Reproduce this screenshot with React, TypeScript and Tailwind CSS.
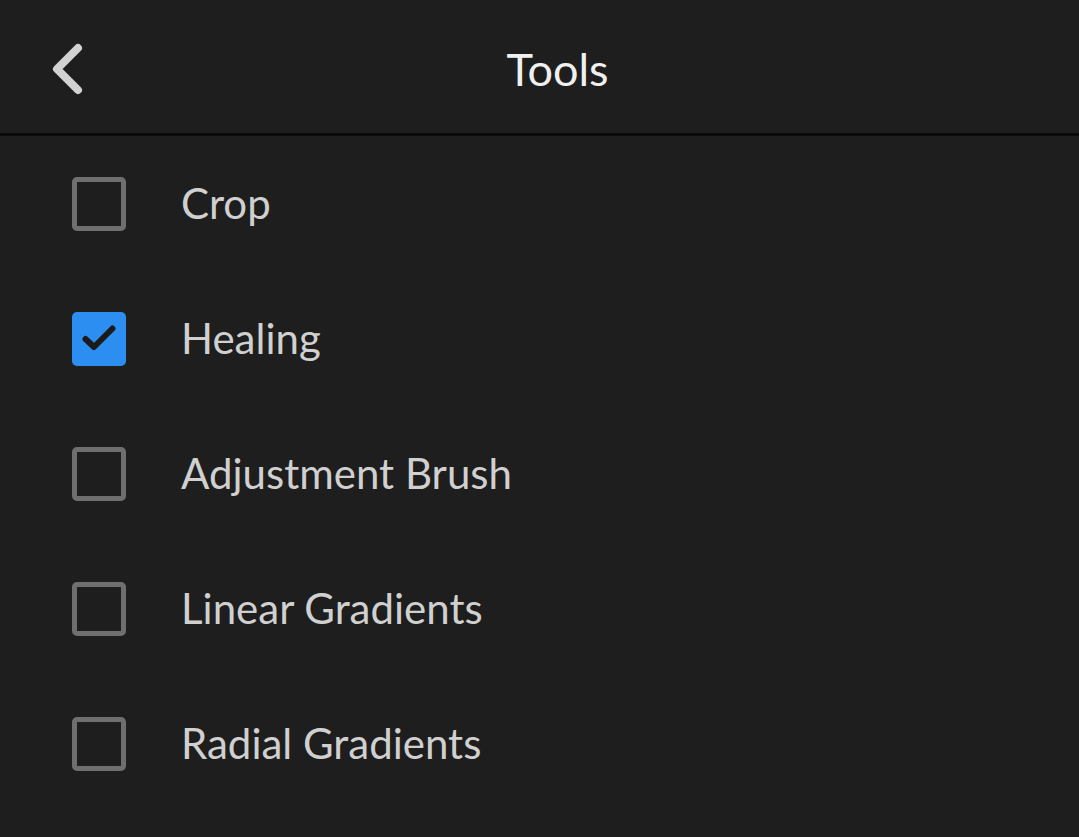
import { useState } from 'react';

const tools = [
  { name: 'Crop', checked: false },
  { name: 'Healing', checked: true },
  { name: 'Adjustment Brush', checked: false },
  { name: 'Linear Gradients', checked: false },
  { name: 'Radial Gradients', checked: false },
];

function Checkbox({ checked }: { checked: boolean }) {
  if (checked) {
    return (
      <div className="w-[54px] h-[54px] rounded-[5px] bg-[#2c8ef0]">
        <svg width="54" height="54" viewBox="0 0 54 54" fill="none">
          <path
            d="M13.5 27 L22 35 L40.5 16.5"
            stroke="#1b1b1b"
            strokeWidth="6"
            strokeLinecap="round"
            strokeLinejoin="round"
          />
        </svg>
      </div>
    );
  }
  return <div className="w-[54px] h-[54px] rounded-[5px] border-[5px] border-[#6f6f6f]" />;
}

export default function App() {
  const [items, setItems] = useState(tools);

  return (
    <div className="min-h-screen bg-[#1e1e1e] font-['Lato','Open_Sans',sans-serif]">
      {/* Header */}
      <div className="h-[133px] flex items-center relative">
        <button className="absolute left-[50px] top-[42px] p-0">
          <svg width="36" height="54" viewBox="0 0 36 54" fill="none">
            <path
              d="M28 6 L7 27 L28 48"
              stroke="#d2d2d2"
              strokeWidth="8"
              strokeLinecap="round"
              strokeLinejoin="round"
            />
          </svg>
        </button>
        <h1 className="flex-1 text-center text-[45px] text-[#f0f0f0] leading-none pl-[36px] pt-[6px]">
          Tools
        </h1>
      </div>
      <div className="h-[3px] bg-[#0a0a0a]" />

      {/* Tool list */}
      <div className="flex flex-col">
        {items.map((t, i) => (
          <div
            key={t.name}
            className="h-[135px] flex items-center pl-[72px] gap-[55px] cursor-pointer"
            onClick={() =>
              setItems(items.map((x, j) => (j === i ? { ...x, checked: !x.checked } : x)))
            }
          >
            <Checkbox checked={t.checked} />
            <span className="text-[42px] text-[#d0d0d0] leading-none pb-[2px]">{t.name}</span>
          </div>
        ))}
      </div>
    </div>
  );
}
